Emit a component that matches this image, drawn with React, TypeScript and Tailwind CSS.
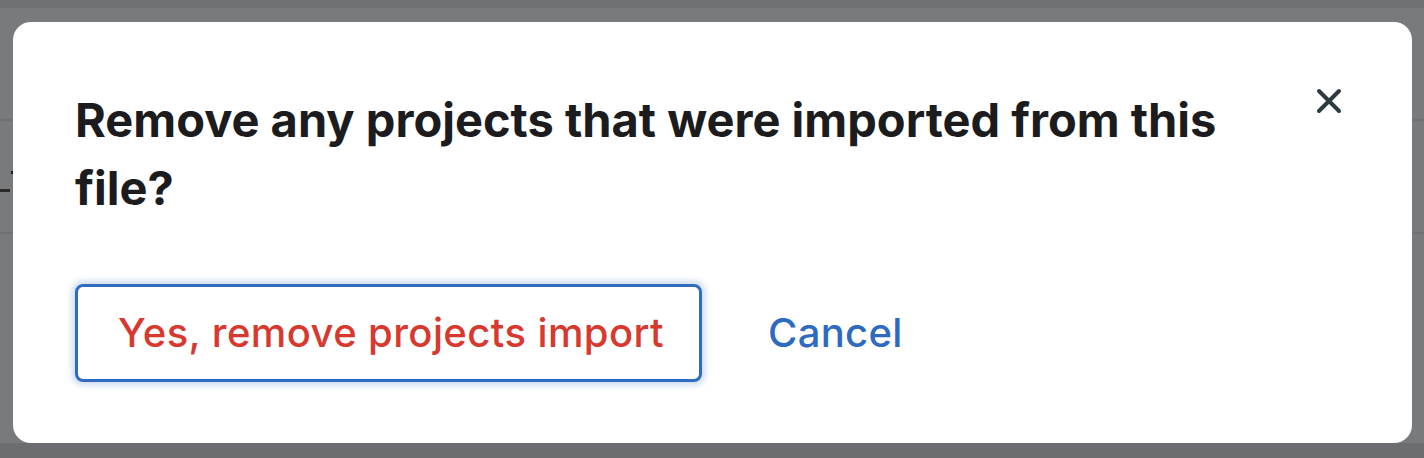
import React from 'react'

const App: React.FC = () => {
  return (
    <div
      className="relative h-[458px] w-full overflow-hidden bg-[#797a7c]"
      style={{ fontFamily: 'Inter, "Noto Sans", sans-serif' }}
    >
      {/* Página por baixo do overlay */}
      <div className="flex h-full flex-col">
        <div className="h-[8px] bg-[#707174]" />
        <div className="h-[111px]" />
        <div className="h-[2px] bg-[#707174]" />
        <div className="relative h-[111px]">
          <div className="absolute left-[11px] top-[50px] h-[3px] w-[3px] bg-[#1e1e1e]" />
          <div className="absolute left-0 top-[68px] h-[3px] w-[10px] bg-[#2a2a2a]" />
        </div>
        <div className="h-[2px] bg-[#707174]" />
        <div className="flex-1" />
        <div className="h-[15px] bg-[#6b6d71]" />
      </div>

      {/* Modal */}
      <div className="absolute left-[13px] top-[22px] h-[421px] w-[1399px] rounded-[18px] bg-white">
        <div className="flex h-full flex-col pl-[62px] pr-[70px] pt-[64px] pb-[60px]">
          <div className="flex items-start justify-between">
            <h2 className="w-[1170px] text-[47px] font-bold leading-[68px] tracking-[0px] text-[#1c1c1e]">
              Remove any projects that were imported from this file?
            </h2>
            <button
              type="button"
              aria-label="Close"
              className="mt-[2px] flex h-[26px] w-[26px] items-center justify-center text-[#2d3a40]"
            >
              <svg viewBox="0 0 26 26" className="h-[26px] w-[26px]" fill="none">
                <path
                  d="M3 3L23 23M23 3L3 23"
                  stroke="currentColor"
                  strokeWidth="4"
                  strokeLinecap="round"
                />
              </svg>
            </button>
          </div>

          <div className="mt-[62px] flex items-center">
            <button
              type="button"
              className="flex h-[98px] w-[627px] items-center rounded-[8px] border-[3px] border-[#2f6bbf] pl-[40px] text-[40px] font-medium tracking-[0.4px] text-[#d8392f] shadow-[0_0_6px_3px_rgba(47,107,191,0.25)]"
            >
              Yes, remove projects import
            </button>
            <button
              type="button"
              className="ml-[66px] text-[40px] font-medium tracking-[0.3px] text-[#2e6bc0]"
            >
              Cancel
            </button>
          </div>
        </div>
      </div>
    </div>
  )
}

export default App
